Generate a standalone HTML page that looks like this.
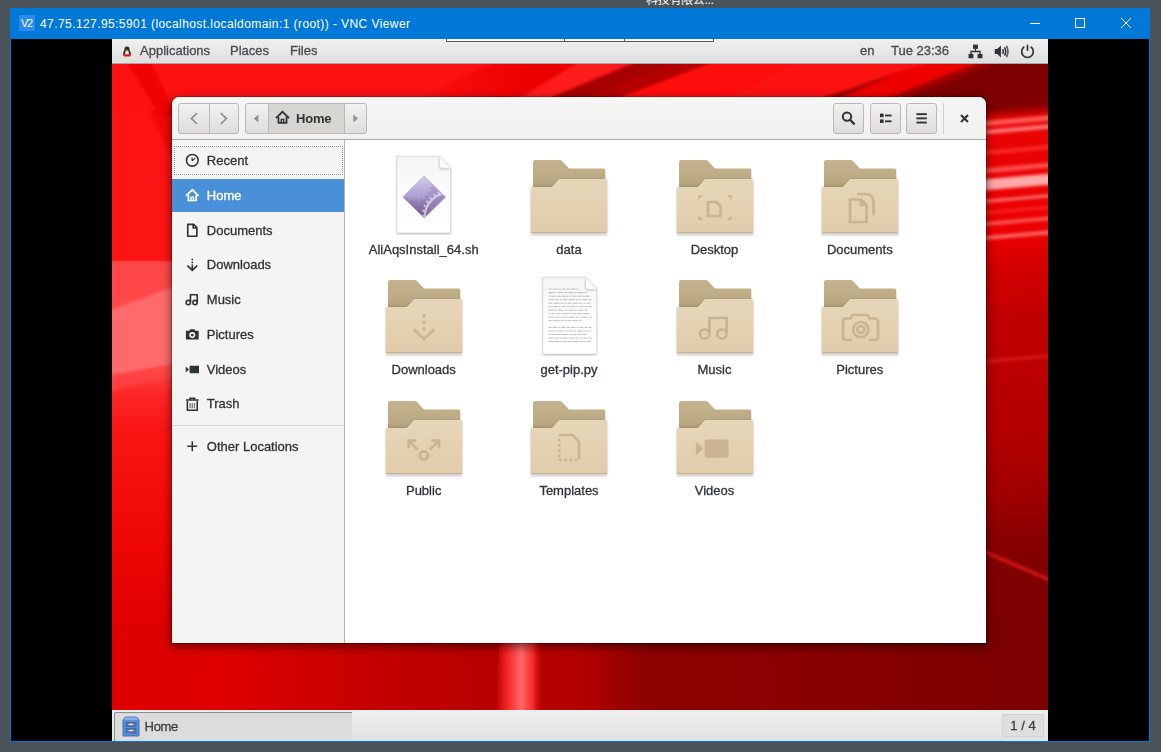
<!DOCTYPE html>
<html lang="en">
<head>
<meta charset="utf-8">
<title>VNC Viewer</title>
<style>
*{box-sizing:border-box;margin:0;padding:0}
html,body{width:1161px;height:752px;overflow:hidden}
body{background:#4b535a;font-family:"Liberation Sans","Noto Sans CJK SC",sans-serif;position:relative}
.abs{position:absolute}
#cjk{position:absolute;left:646px;top:-8px;font-size:12px;line-height:16px;color:#fff;white-space:nowrap;letter-spacing:-.3px}
#vnc{position:absolute;left:10px;top:8px;width:1140px;height:734px;background:#0078d7}
#vtitle{position:absolute;left:30px;top:8px;height:16px;line-height:16px;font-size:12px;color:#fff;white-space:nowrap;letter-spacing:.42px}
#vicon{position:absolute;left:9px;top:7px;width:16px;height:16px;background:#2b8af0;color:#fff;font-size:11px;line-height:16px;text-align:center;letter-spacing:-1.2px;text-indent:-1px}
#black{position:absolute;left:1px;top:31px;width:1138px;height:702px;background:#000}
#peek{position:absolute;left:436px;top:31px;width:268px;height:3px;background:#fafafa;border:1px solid #5a5a5a;border-top:none}
#peek i{position:absolute;top:0;width:1px;height:2px;background:#5a5a5a}
#desk{position:absolute;left:101px;top:0;width:936px;height:702px;overflow:hidden;background:#e00000}
#wall{position:absolute;left:0;top:0;width:936px;height:702px}
#topbar{position:absolute;left:0;top:0;width:936px;height:25px;background:linear-gradient(#f0f0f0,#dfdfdf);border-bottom:1px solid #a6a4a4;font-size:13px;color:#474b4d}
#topbar span{position:absolute;top:0;line-height:24px;white-space:nowrap}
#topbar svg{position:absolute}
#botbar{position:absolute;left:0;top:671px;width:936px;height:31px;background:linear-gradient(#eeeeee,#e1e1e1);border-top:1px solid #f4f0f0;font-size:13px;color:#3a3e40}
#task{position:absolute;left:2px;top:1px;width:238px;height:30px;background:#dcdcdc;border:1px solid #8c8c8c;border-right:none;border-bottom:none;border-radius:2px 0 0 0}
#task span{position:absolute;left:29.6px;top:0;line-height:27px;letter-spacing:-.35px}
#ws{position:absolute;left:890px;top:3px;width:42px;height:23px;background:#dedede;border:1px solid #d2d2d2;text-align:center;line-height:21px;font-size:13px}
#win{position:absolute;left:60px;top:58px;width:814px;height:546px;border-radius:7px 7px 0 0;box-shadow:0 3px 10px 1px rgba(0,0,0,.5),0 0 0 1px rgba(0,0,0,.2);background:#fff;overflow:hidden}
#hdr{position:absolute;left:0;top:0;width:814px;height:43px;background:linear-gradient(#f6f6f5,#f1f1f0);border-bottom:1px solid #acaca9;border-radius:7px 7px 0 0}
.btn{position:absolute;top:6px;height:31px;border:1px solid #b8b8b4;border-radius:3px;background:linear-gradient(#f2f1f0,#dedddb);overflow:hidden}
.btn svg{position:absolute}
#side{position:absolute;left:0;top:43px;width:173px;height:503px;background:#f4f4f2;border-right:1px solid #b4b4b0;font-size:13px;color:#2e3436}
.row{position:absolute;left:0;width:172px;height:33px}
.row span{position:absolute;left:34.8px;top:0;line-height:33px;white-space:nowrap}
.row svg{position:absolute;left:12.7px;top:9.2px}
.sel{background:#4a90d9;color:#fff}
#main{position:absolute;left:173px;top:43px;width:641px;height:503px;background:#fff;font-size:13px;color:#2e3436}
.lbl{position:absolute;width:140px;text-align:center;line-height:16px;white-space:nowrap}
.ic{position:absolute}
#hdr,#side,#main,#topbar,#botbar{filter:blur(.4px)}
#side,#main,#topbar,#botbar{-webkit-text-stroke:.3px currentColor}
</style>
</head>
<body>
<div id="cjk">科技有限公...</div>
<div id="vnc">
  <div id="vicon">V2</div>
  <div id="vtitle">47.75.127.95:5901 (localhost.localdomain:1 (root)) - VNC Viewer</div>
  <svg class="abs" style="left:1010px;top:0" width="130" height="31" viewBox="0 0 130 31">
    <g stroke="#fff" stroke-width="1" fill="none">
      <path d="M10 15.5h10"/>
      <rect x="55.5" y="10.5" width="9" height="9"/>
      <path d="M101 10l10 10M111 10l-10 10"/>
    </g>
  </svg>
  <div id="black">
    <div id="desk">
<svg id="wall" width="936" height="702" viewBox="112 39 936 702">
<defs>
<linearGradient id="gL" x1="0" y1="64" x2="0" y2="710" gradientUnits="userSpaceOnUse">
<stop offset="0" stop-color="#fd1212"/><stop offset=".303" stop-color="#fc1414"/><stop offset=".307" stop-color="#ff4646"/><stop offset=".47" stop-color="#ff4a4a"/><stop offset=".51" stop-color="#fd2626"/><stop offset=".57" stop-color="#fb1414"/><stop offset=".75" stop-color="#ee0606"/><stop offset=".876" stop-color="#df0000"/><stop offset="1" stop-color="#de0000"/>
</linearGradient>
<linearGradient id="gB" x1="112" y1="0" x2="1048" y2="0" gradientUnits="userSpaceOnUse">
<stop offset="0" stop-color="#de0000"/><stop offset=".12" stop-color="#e00000"/><stop offset=".28" stop-color="#c40000"/><stop offset=".4" stop-color="#b80000"/><stop offset=".5" stop-color="#b40000"/><stop offset=".57" stop-color="#8e0000"/><stop offset=".8" stop-color="#880000"/><stop offset="1" stop-color="#7c0000"/>
</linearGradient>
<linearGradient id="gS" x1="496" y1="0" x2="542" y2="0" gradientUnits="userSpaceOnUse">
<stop offset="0" stop-color="#ff3030" stop-opacity="0"/><stop offset=".25" stop-color="#ff2a2a" stop-opacity=".9"/><stop offset=".55" stop-color="#ff6a6a"/><stop offset=".8" stop-color="#ff3030" stop-opacity=".9"/><stop offset="1" stop-color="#e01010" stop-opacity="0"/>
</linearGradient>
<linearGradient id="gR" x1="0" y1="97" x2="0" y2="650" gradientUnits="userSpaceOnUse">
<stop offset="0" stop-color="#7c0000"/><stop offset=".018" stop-color="#860000"/><stop offset=".04" stop-color="#ea0404"/><stop offset=".25" stop-color="#ec0000"/><stop offset=".3" stop-color="#d40000"/><stop offset=".4" stop-color="#c00000"/><stop offset=".6" stop-color="#b40000"/><stop offset=".72" stop-color="#a00000"/><stop offset=".78" stop-color="#8c0000"/><stop offset=".85" stop-color="#800000"/><stop offset="1" stop-color="#7c0000"/>
</linearGradient>
<filter id="bl" x="-10%" y="-10%" width="120%" height="120%"><feGaussianBlur stdDeviation="1.6"/></filter>
<filter id="bl2" x="-20%" y="-20%" width="140%" height="140%"><feGaussianBlur stdDeviation="6"/></filter>
<clipPath id="cr"><rect x="978" y="97" width="70" height="565"/></clipPath>
<linearGradient id="gD" x1="400" y1="0" x2="540" y2="0" gradientUnits="userSpaceOnUse"><stop offset="0" stop-color="#ee0000" stop-opacity="0"/><stop offset="1" stop-color="#ea0000"/></linearGradient>
</defs>
<rect x="112" y="39" width="936" height="702" fill="#e00000"/>
<!-- left strip -->
<rect x="112" y="64" width="80" height="650" fill="url(#gL)"/>
<polygon points="128,62 158,62 182,160 172,160" fill="#e60000" opacity=".5" filter="url(#bl)"/>
<polygon points="108,311 184,283 184,363 108,376" fill="#ff6a6a" filter="url(#bl)"/>
<polygon points="108,376 184,363 184,372 108,392" fill="#ff4444" opacity=".7" filter="url(#bl)"/>
<!-- bottom strip -->
<rect x="112" y="630" width="936" height="82" fill="url(#gB)"/>
<polygon points="500,630 540,630 544,712 496,712" fill="url(#gS)"/>
<!-- top strip -->
<rect x="112" y="60" width="936" height="50" fill="#fd1212"/>
<g filter="url(#bl)">
<polygon points="126,60 150,60 176,116 160,116" fill="#ec0000" opacity=".8"/>
<polygon points="380,116 500,60 582,60 492,116" fill="url(#gD)"/>
<polygon points="492,116 582,60 640.5,60 505,116" fill="#ff1a1a"/>
<polygon points="505,116 640.5,60 684,60 541,116" fill="#a60000"/>
<polygon points="541,116 684,60 719,60 571,116" fill="#b40000"/>
<polygon points="571,116 719,60 800,60 690,116" fill="#ff0a0a"/>
<polygon points="770,116 905,70 800,116" fill="#a00000"/>
<polygon points="800,116 905,70 938,60 1010,60 875,116" fill="#ee0000"/>
<polygon points="880,101 920,101 1024,60 984,60" fill="#9c0000"/><polygon points="898,101 1002,60 1060,60 1060,101" fill="#7e0000"/>
</g>
<!-- right strip -->
<g clip-path="url(#cr)">
<g transform="rotate(-5 1017 180)"><rect x="860" y="80" width="310" height="600" fill="url(#gR)"/>
<g filter="url(#bl)">
<rect x="860" y="118.5" width="310" height="5" fill="#ff6a6a" opacity="0.85"/>
<rect x="860" y="127.5" width="310" height="4" fill="#ff8a8a" opacity="0.9"/>
<rect x="860" y="148.0" width="310" height="4" fill="#ff3838" opacity="0.7"/>
<rect x="860" y="165.5" width="310" height="5" fill="#ff5a5a" opacity="0.85"/>
<rect x="860" y="176.5" width="310" height="11" fill="#ffb0b0" opacity="0.95"/>
<rect x="860" y="197.0" width="310" height="3" fill="#ff7a7a" opacity="0.9"/>
<rect x="860" y="208.5" width="310" height="3" fill="#ff3a3a" opacity="0.6"/>
<rect x="860" y="219.25" width="310" height="3.5" fill="#ff6868" opacity="0.85"/>
<rect x="860" y="233.0" width="310" height="4" fill="#ff7474" opacity="0.85"/>
<rect x="860" y="356.0" width="310" height="4" fill="#e82020" opacity="0.6"/>
</g></g>
<polygon points="976,546 1050,578 1050,582 976,550" fill="#e01818" opacity=".85" filter="url(#bl)"/>
</g>
</svg>
      <div id="topbar">
        <span style="left:28px">Applications</span>
        <span style="left:118px">Places</span>
        <span style="left:178px">Files</span>
        <span style="left:748px">en</span>
        <span style="left:779px">Tue 23:36</span>

<svg style="left:9px;top:6px" width="12" height="13" viewBox="0 0 12 13"><ellipse cx="6" cy="7" rx="5.6" ry="5.6" fill="#f4f4f4" stroke="#d0d0d0" stroke-width=".6"/><path d="M6 1.6 Q8.6 1.6 8.6 5 Q10.4 7.4 10 9.4 H2 Q1.6 7.4 3.4 5 Q3.4 1.6 6 1.6Z" fill="#2a2a2a"/><ellipse cx="6" cy="7.6" rx="2" ry="2.2" fill="#e8e0d0"/><path d="M4.6 4.8 H7.4 L6 6 Z" fill="#f0a000"/><path d="M1.6 9.6 H10.4 L9 11.4 H3 Z" fill="#e01010"/></svg>
<svg style="left:856px;top:5px" width="15" height="15" viewBox="0 0 16 16" fill="#2e3436"><rect x="5.4" y="0.6" width="5.2" height="4.6"/><rect x="0.6" y="10.6" width="5.2" height="4.6"/><rect x="10.2" y="10.6" width="5.2" height="4.6"/><path d="M7.3 5 H8.7 V7.3 H13.5 V10.8 H12.1 V8.7 H3.9 V10.8 H2.5 V7.3 H7.3 Z"/></svg>
<svg style="left:881.5px;top:5px" width="15" height="15" viewBox="0 0 16 16" fill="#2e3436"><path d="M0.8 5.4 H3.4 L7.4 1.6 V14.4 L3.4 10.6 H0.8 Z"/><g fill="none" stroke="#2e3436" stroke-width="1.7"><path d="M9.2 5.4 Q10.6 8 9.2 10.6"/><path d="M11.3 3.6 Q13.6 8 11.3 12.4"/><path d="M13.4 2 Q16.4 8 13.4 14" opacity=".8"/></g></svg>
<svg style="left:907.5px;top:5px" width="15" height="15" viewBox="0 0 16 16" fill="none" stroke="#2e3436" stroke-width="1.8"><path d="M8 0.8 V7.4"/><path d="M4.6 3 A6.2 6.2 0 1 0 11.4 3"/></svg>

      </div>
      <div id="win">
        <div id="hdr">
<div class="btn" style="left:6px;width:61px"><i class="abs" style="left:30px;top:0;width:1px;height:31px;background:#b8b8b4"></i>
<svg width="60" height="29" viewBox="0 0 60 29" style="left:0;top:0" fill="none" stroke="#8e9192" stroke-width="1.7"><path d="M18 9.2 L12.4 14.6 L18 20"/><path d="M41.8 9.2 L47.4 14.6 L41.8 20"/></svg></div>
<div class="btn" style="left:73px;width:121.5px">
<i class="abs" style="left:21.5px;top:0;width:77px;height:31px;background:#d6d5d2;border-left:1px solid #b8b8b4;border-right:1px solid #b8b8b4"></i>
<svg width="120" height="29" viewBox="0 0 120 29" style="left:0;top:0"><path d="M12.4 10.6 V18.6 L7.8 14.6 Z" fill="#8e9192"/><path d="M107.4 10.6 V18.6 L112 14.6 Z" fill="#8e9192"/></svg>
<svg width="15" height="15" viewBox="0 0 16 16" style="left:29px;top:6.4px;color:#2e3436" fill="currentColor"><path d="M1 8.6 L8 2 L15 8.6" fill="none" stroke="currentColor" stroke-width="2"/><path d="M3.7 7.4 V13.7 H12.3 V7.4" fill="none" stroke="currentColor" stroke-width="1.9"/><path d="M6.7 13.6 V10 H9.3 V13.6" fill="none" stroke="currentColor" stroke-width="1.5"/></svg>
<span class="abs" style="left:50px;top:0;line-height:29px;font-size:13px;font-weight:bold;color:#2e3436;letter-spacing:-.2px">Home</span>
</div>
<div class="btn" style="left:661px;width:31px"><svg width="29" height="29" viewBox="0 0 29 29" style="left:0;top:0" fill="none" stroke="#2e3436"><circle cx="13" cy="12.6" r="4.2" stroke-width="2"/><path d="M16 15.8 L20.6 20.4" stroke-width="2.2"/></svg></div>
<div class="btn" style="left:698px;width:30.5px"><svg width="29" height="29" viewBox="0 0 29 29" style="left:0;top:0" fill="#2e3436"><rect x="9" y="9.6" width="3.6" height="3.6"/><rect x="9" y="15.4" width="3.6" height="3.6"/><rect x="14" y="10.6" width="6.6" height="1.8"/><rect x="14" y="16.4" width="6.6" height="1.8"/></svg></div>
<div class="btn" style="left:734.2px;width:30.5px"><svg width="29" height="29" viewBox="0 0 29 29" style="left:0;top:0" fill="#2e3436"><rect x="9.4" y="9.2" width="10.4" height="1.9"/><rect x="9.4" y="13.4" width="10.4" height="1.9"/><rect x="9.4" y="17.6" width="10.4" height="1.9"/></svg></div>
<i class="abs" style="left:771px;top:6px;width:1px;height:31px;background:#d0d0cd"></i>
<svg class="abs" style="left:787px;top:16px" width="11" height="11" viewBox="0 0 11 11" stroke="#2e3436" stroke-width="2.1"><path d="M2 2 L9 9 M9 2 L2 9"/></svg>
</div>
        <div id="side">
<div class="row" style="top:4.30px"><svg width="14.6" height="14.6" viewBox="0 0 16 16" fill="currentColor" style=""><circle cx="8" cy="8" r="6.4" fill="none" stroke="currentColor" stroke-width="1.7"/><path d="M8 8.6 L7.6 5 M7.8 8.6 L11.2 5.6" stroke="currentColor" stroke-width="1.3" fill="none"/></svg><span>Recent</span></div>
<div class="row sel" style="top:39.03px"><svg width="14.6" height="14.6" viewBox="0 0 16 16" fill="currentColor" style=""><path d="M1 8.6 L8 2 L15 8.6" fill="none" stroke="currentColor" stroke-width="2"/><path d="M3.7 7.4 V13.7 H12.3 V7.4" fill="none" stroke="currentColor" stroke-width="1.9"/><path d="M6.7 13.6 V10 H9.3 V13.6" fill="none" stroke="currentColor" stroke-width="1.5"/></svg><span>Home</span></div>
<div class="row" style="top:73.76px"><svg width="14.6" height="14.6" viewBox="0 0 16 16" fill="currentColor" style=""><path d="M3 1.5 H9.5 L13 5 V14.5 H3 Z M9 2 V5.5 H12.6" fill="none" stroke="currentColor" stroke-width="1.8" stroke-linejoin="round"/></svg><span>Documents</span></div>
<div class="row" style="top:108.49px"><svg width="14.6" height="14.6" viewBox="0 0 16 16" fill="currentColor" style=""><circle cx="8" cy="1.6" r="1"/><circle cx="8" cy="4.8" r="1"/><path d="M8 7.2 V13.4 M2.6 8.4 L8 13.6 L13.4 8.4" fill="none" stroke="currentColor" stroke-width="1.8"/></svg><span>Downloads</span></div>
<div class="row" style="top:143.22px"><svg width="14.6" height="14.6" viewBox="0 0 16 16" fill="currentColor" style=""><circle cx="3.6" cy="11.6" r="2.4" fill="none" stroke="currentColor" stroke-width="1.7"/><circle cx="11" cy="11.6" r="2.4" fill="none" stroke="currentColor" stroke-width="1.7"/><path d="M6 11.6 V3 H13.4 V11.6" fill="none" stroke="currentColor" stroke-width="1.8"/></svg><span>Music</span></div>
<div class="row" style="top:177.95px"><svg width="14.6" height="14.6" viewBox="0 0 16 16" fill="currentColor" style=""><path d="M1 4.2 H4.6 L5.8 2.4 H10.2 L11.4 4.2 H15 V13.6 H1 Z M8 5.6 A3.3 3.3 0 1 0 8 12.2 A3.3 3.3 0 1 0 8 5.6 Z M8 7.4 A1.5 1.5 0 1 1 8 10.4 A1.5 1.5 0 1 1 8 7.4Z" fill="currentColor" fill-rule="evenodd"/></svg><span>Pictures</span></div>
<div class="row" style="top:212.68px"><svg width="14.6" height="14.6" viewBox="0 0 16 16" fill="currentColor" style=""><rect x="5" y="4" width="10.6" height="8.4" rx=".8"/><path d="M0.8 4.8 L4.4 8.2 L0.8 11.6 Z"/></svg><span>Videos</span></div>
<div class="row" style="top:247.41px"><svg width="14.6" height="14.6" viewBox="0 0 16 16" fill="currentColor" style=""><path d="M2.6 4.4 V14.6 H13.4 V4.4" fill="none" stroke="currentColor" stroke-width="1.7"/><path d="M1 3.4 H15 M5.4 3 V1.4 H10.6 V3" fill="none" stroke="currentColor" stroke-width="1.6"/><path d="M5.6 6.6 V12.4 M8 6.6 V12.4 M10.4 6.6 V12.4" stroke="currentColor" stroke-width="1.5" opacity=".6"/></svg><span>Trash</span></div>
<div class="abs" style="left:2px;top:6px;width:169px;height:29px;border:1px dotted #9a9a98"></div>
<div class="abs" style="left:0;top:285px;width:172px;height:1px;background:#d5d5d2"></div>
<div class="row" style="top:289.8px"><svg width="14.6" height="14.6" viewBox="0 0 16 16" fill="currentColor" style=""><path d="M8 2.6 V13.4 M2.6 8 H13.4" stroke="currentColor" stroke-width="1.7"/></svg><span>Other Locations</span></div>
</div>
        <div id="main">
<svg width="0" height="0" style="position:absolute"><defs>
<linearGradient id="fb" x1="0" y1="0" x2="0" y2="1"><stop offset="0" stop-color="#c3b28d"/><stop offset=".7" stop-color="#bba983"/><stop offset="1" stop-color="#a9966f"/></linearGradient>
<linearGradient id="ff" x1="0" y1="0" x2="0" y2="1"><stop offset="0" stop-color="#e7d6b9"/><stop offset="1" stop-color="#e0ccab"/></linearGradient>
<linearGradient id="pg" x1="0" y1="0" x2="0" y2="1"><stop offset="0" stop-color="#f4f4f4"/><stop offset=".5" stop-color="#fdfdfd"/><stop offset="1" stop-color="#ffffff"/></linearGradient>
<linearGradient id="dm" x1="0" y1="-21" x2="0" y2="21" gradientUnits="userSpaceOnUse"><stop offset="0" stop-color="#d2ccf2"/><stop offset=".5" stop-color="#ab9dd0"/><stop offset="1" stop-color="#7c5b92"/></linearGradient>
<filter id="fs" x="-10%" y="-10%" width="120%" height="120%"><feGaussianBlur stdDeviation="1.1"/></filter>
</defs></svg>
<svg class="ic" style="left:45.7px;top:13.0px" width="66" height="86" viewBox="0 0 66 86">
<path d="M5.8 3.2 H48.6 L59.6 15.2 V80 H5.8 Z" fill="#000" opacity=".3" filter="url(#fs)" transform="translate(0,.9)"/>
<path d="M5.8 3.2 H48.6 L59.6 15.2 V80 H5.8 Z" fill="url(#pg)" stroke="#d6d6d6" stroke-width=".7"/>
<path d="M48.6 3.2 V12.8 Q48.6 15.2 51 15.2 H59.6 Z" fill="#000" opacity=".25" filter="url(#fs)" transform="translate(-.3,1)"/>
<path d="M48.6 3.2 V12.8 Q48.6 15.2 51 15.2 H59.6 Z" fill="#fdfdfd" stroke="#d8d8d8" stroke-width=".5"/>
<g transform="translate(33.2,44.1)"><clipPath id="dmc"><path d="M0 -21.2 L21.4 0 L0 21 L-21.4 0 Z"/></clipPath>
<path d="M0 -21.2 L21.4 0 L0 21 L-21.4 0 Z" fill="url(#dm)"/>
<g clip-path="url(#dmc)">
<rect x="-22" y="-22" width="44" height="44" fill="#3a1f5a" opacity=".13"/>
<circle cx="-8.5" cy="-12.5" r="14.6" fill="url(#dm)"/>
<circle cx="-8.5" cy="-12.5" r="15.6" fill="none" stroke="url(#dm)" stroke-width="2.4" stroke-dasharray="2.5 2.4"/>
<circle cx="25" cy="20" r="22" fill="#a48fc4" opacity=".35"/>
<circle cx="25" cy="20" r="24.4" fill="none" stroke="#e4dcf2" stroke-opacity=".75" stroke-width="2.4"/>
<circle cx="25" cy="20" r="26.6" fill="none" stroke="#e4dcf2" stroke-opacity=".6" stroke-width="2.6" stroke-dasharray="2.4 2.5"/>
</g>
<path d="M0 -21.2 L21.4 0 L0 21 L-21.4 0 Z" fill="none" stroke="#b5a6d2" stroke-opacity=".7" stroke-width=".8"/></g></svg><div class="lbl" style="left:8.7px;top:101.5px">AliAqsInstall_64.sh</div>
<svg class="ic" style="left:179.0px;top:17.7px" width="90" height="80" viewBox="0 0 90 80">
<path d="M9 32 V4.2 Q9 2 11.2 2 H35.6 Q37 2 38 3 L45 10.4 H79.2 Q81.3 10.4 81.3 12.6 V32 Z" fill="url(#fb)"/>
<path d="M6.7 77.4 V31 Q6.7 29.1 8.7 29.1 H26.6 Q28 29.1 28.8 28 L33.8 22.2 Q34.7 21.1 36 21.1 H81.3 Q83.3 21.1 83.3 23 V77.4 Z" fill="#000" opacity=".18" filter="url(#fs)"/>
<path d="M6.7 73.5 V31 Q6.7 29.1 8.7 29.1 H26.6 Q28 29.1 28.8 28 L33.8 22.2 Q34.7 21.1 36 21.1 H81.3 Q83.3 21.1 83.3 23 V73.5 Q83.3 75.1 81.7 75.1 H8.3 Q6.7 75.1 6.7 73.5 Z" fill="url(#ff)"/>
<path d="M6.7 73 V73.5 Q6.7 75.1 8.3 75.1 H81.7 Q83.3 75.1 83.3 73.5 V73 Q83.3 74 81.7 74 H8.3 Q6.7 74 6.7 73 Z" fill="#c8b28c"/>
<g fill="none" stroke="#c9b390" stroke-width="2.7" transform="translate(45,2)"></g>
</svg><div class="lbl" style="left:154.0px;top:101.5px">data</div>
<svg class="ic" style="left:324.5px;top:17.7px" width="90" height="80" viewBox="0 0 90 80">
<path d="M9 32 V4.2 Q9 2 11.2 2 H35.6 Q37 2 38 3 L45 10.4 H79.2 Q81.3 10.4 81.3 12.6 V32 Z" fill="url(#fb)"/>
<path d="M6.7 77.4 V31 Q6.7 29.1 8.7 29.1 H26.6 Q28 29.1 28.8 28 L33.8 22.2 Q34.7 21.1 36 21.1 H81.3 Q83.3 21.1 83.3 23 V77.4 Z" fill="#000" opacity=".18" filter="url(#fs)"/>
<path d="M6.7 73.5 V31 Q6.7 29.1 8.7 29.1 H26.6 Q28 29.1 28.8 28 L33.8 22.2 Q34.7 21.1 36 21.1 H81.3 Q83.3 21.1 83.3 23 V73.5 Q83.3 75.1 81.7 75.1 H8.3 Q6.7 75.1 6.7 73.5 Z" fill="url(#ff)"/>
<path d="M6.7 73 V73.5 Q6.7 75.1 8.3 75.1 H81.7 Q83.3 75.1 83.3 73.5 V73 Q83.3 74 81.7 74 H8.3 Q6.7 74 6.7 73 Z" fill="#c8b28c"/>
<g fill="none" stroke="#c9b390" stroke-width="2.7" transform="translate(45,2)"><path d="M-7 42 H1.5 L5.5 46 V56 H-7 Z" /><g fill="#c9b390" stroke="none"><path d="M-16.6 35.3 H-12 L-16.6 40Z"/><path d="M16.6 35.3 H12 L16.6 40Z"/><path d="M-16.6 60 H-12 L-16.6 55.3Z"/><path d="M16.6 60 H12 L16.6 55.3Z"/></g></g>
</svg><div class="lbl" style="left:299.5px;top:101.5px">Desktop</div>
<svg class="ic" style="left:469.8px;top:17.7px" width="90" height="80" viewBox="0 0 90 80">
<path d="M9 32 V4.2 Q9 2 11.2 2 H35.6 Q37 2 38 3 L45 10.4 H79.2 Q81.3 10.4 81.3 12.6 V32 Z" fill="url(#fb)"/>
<path d="M6.7 77.4 V31 Q6.7 29.1 8.7 29.1 H26.6 Q28 29.1 28.8 28 L33.8 22.2 Q34.7 21.1 36 21.1 H81.3 Q83.3 21.1 83.3 23 V77.4 Z" fill="#000" opacity=".18" filter="url(#fs)"/>
<path d="M6.7 73.5 V31 Q6.7 29.1 8.7 29.1 H26.6 Q28 29.1 28.8 28 L33.8 22.2 Q34.7 21.1 36 21.1 H81.3 Q83.3 21.1 83.3 23 V73.5 Q83.3 75.1 81.7 75.1 H8.3 Q6.7 75.1 6.7 73.5 Z" fill="url(#ff)"/>
<path d="M6.7 73 V73.5 Q6.7 75.1 8.3 75.1 H81.7 Q83.3 75.1 83.3 73.5 V73 Q83.3 74 81.7 74 H8.3 Q6.7 74 6.7 73 Z" fill="#c8b28c"/>
<g fill="none" stroke="#c9b390" stroke-width="2.7" transform="translate(45,2)"><path d="M-10 39.5 H1 L6.6 45 V62 H-10 Z M1 39.5 V45 H6.6"/><path d="M-3 34 H5 Q13.5 34 13.5 42.5 V54.5"/></g>
</svg><div class="lbl" style="left:444.8px;top:101.5px">Documents</div>
<svg class="ic" style="left:33.7px;top:138.2px" width="90" height="80" viewBox="0 0 90 80">
<path d="M9 32 V4.2 Q9 2 11.2 2 H35.6 Q37 2 38 3 L45 10.4 H79.2 Q81.3 10.4 81.3 12.6 V32 Z" fill="url(#fb)"/>
<path d="M6.7 77.4 V31 Q6.7 29.1 8.7 29.1 H26.6 Q28 29.1 28.8 28 L33.8 22.2 Q34.7 21.1 36 21.1 H81.3 Q83.3 21.1 83.3 23 V77.4 Z" fill="#000" opacity=".18" filter="url(#fs)"/>
<path d="M6.7 73.5 V31 Q6.7 29.1 8.7 29.1 H26.6 Q28 29.1 28.8 28 L33.8 22.2 Q34.7 21.1 36 21.1 H81.3 Q83.3 21.1 83.3 23 V73.5 Q83.3 75.1 81.7 75.1 H8.3 Q6.7 75.1 6.7 73.5 Z" fill="url(#ff)"/>
<path d="M6.7 73 V73.5 Q6.7 75.1 8.3 75.1 H81.7 Q83.3 75.1 83.3 73.5 V73 Q83.3 74 81.7 74 H8.3 Q6.7 74 6.7 73 Z" fill="#c8b28c"/>
<g fill="none" stroke="#c9b390" stroke-width="2.7" transform="translate(45,2)"><circle cx="0" cy="35.6" r="1.9" fill="#c9b390" stroke="none"/><circle cx="0" cy="42.3" r="1.9" fill="#c9b390" stroke="none"/><circle cx="0" cy="48.8" r="1.9" fill="#c9b390" stroke="none"/><path d="M-10.3 49.3 L0 59.2 L10.3 49.3"/></g>
</svg><div class="lbl" style="left:8.7px;top:222px">Downloads</div>
<svg class="ic" style="left:191.7px;top:134.3px" width="66" height="86" viewBox="0 0 66 86">
<path d="M5.8 3.2 H48.6 L59.6 15.2 V80 H5.8 Z" fill="#000" opacity=".3" filter="url(#fs)" transform="translate(0,.9)"/>
<path d="M5.8 3.2 H48.6 L59.6 15.2 V80 H5.8 Z" fill="url(#pg)" stroke="#d6d6d6" stroke-width=".7"/>
<path d="M48.6 3.2 V12.8 Q48.6 15.2 51 15.2 H59.6 Z" fill="#000" opacity=".25" filter="url(#fs)" transform="translate(-.3,1)"/>
<path d="M48.6 3.2 V12.8 Q48.6 15.2 51 15.2 H59.6 Z" fill="#fdfdfd" stroke="#d8d8d8" stroke-width=".5"/>
<path d="M11.5 15.1 h30" stroke="#8c8c8c" stroke-width=".9" stroke-dasharray="3 1 5 1 2 1 4 1" opacity=".62" fill="none"/><path d="M11.5 18.6 h38" stroke="#8c8c8c" stroke-width=".9" stroke-dasharray="5 1 2 1 6 1 3 1" opacity=".62" fill="none"/><path d="M11.5 22.2 h41" stroke="#8c8c8c" stroke-width=".9" stroke-dasharray="2 1 4 1 4 1 7 1" opacity=".62" fill="none"/><path d="M11.5 25.7 h43" stroke="#8c8c8c" stroke-width=".9" stroke-dasharray="6 1 3 1 2 1 5 1" opacity=".62" fill="none"/><path d="M11.5 29.2 h43" stroke="#8c8c8c" stroke-width=".9" stroke-dasharray="4 1 6 1 3 1 2 1" opacity=".62" fill="none"/><path d="M11.5 32.7 h43" stroke="#8c8c8c" stroke-width=".9" stroke-dasharray="3 1 5 1 2 1 4 1" opacity=".62" fill="none"/><path d="M11.5 36.2 h40" stroke="#8c8c8c" stroke-width=".9" stroke-dasharray="5 1 2 1 6 1 3 1" opacity=".62" fill="none"/><path d="M11.5 39.7 h42" stroke="#8c8c8c" stroke-width=".9" stroke-dasharray="2 1 4 1 4 1 7 1" opacity=".62" fill="none"/><path d="M11.5 43.2 h43" stroke="#8c8c8c" stroke-width=".9" stroke-dasharray="6 1 3 1 2 1 5 1" opacity=".62" fill="none"/><path d="M11.5 46.7 h33" stroke="#8c8c8c" stroke-width=".9" stroke-dasharray="4 1 6 1 3 1 2 1" opacity=".62" fill="none"/><path d="M11.5 53.4 h43" stroke="#8c8c8c" stroke-width=".9" stroke-dasharray="3 1 5 1 2 1 4 1" opacity=".62" fill="none"/><path d="M11.5 57.0 h42" stroke="#8c8c8c" stroke-width=".9" stroke-dasharray="5 1 2 1 6 1 3 1" opacity=".62" fill="none"/><path d="M11.5 60.5 h38" stroke="#8c8c8c" stroke-width=".9" stroke-dasharray="2 1 4 1 4 1 7 1" opacity=".62" fill="none"/><path d="M11.5 64.0 h43" stroke="#8c8c8c" stroke-width=".9" stroke-dasharray="6 1 3 1 2 1 5 1" opacity=".62" fill="none"/><path d="M11.5 67.5 h43" stroke="#8c8c8c" stroke-width=".9" stroke-dasharray="4 1 6 1 3 1 2 1" opacity=".62" fill="none"/></svg><div class="lbl" style="left:154.0px;top:222px">get-pip.py</div>
<svg class="ic" style="left:324.5px;top:138.2px" width="90" height="80" viewBox="0 0 90 80">
<path d="M9 32 V4.2 Q9 2 11.2 2 H35.6 Q37 2 38 3 L45 10.4 H79.2 Q81.3 10.4 81.3 12.6 V32 Z" fill="url(#fb)"/>
<path d="M6.7 77.4 V31 Q6.7 29.1 8.7 29.1 H26.6 Q28 29.1 28.8 28 L33.8 22.2 Q34.7 21.1 36 21.1 H81.3 Q83.3 21.1 83.3 23 V77.4 Z" fill="#000" opacity=".18" filter="url(#fs)"/>
<path d="M6.7 73.5 V31 Q6.7 29.1 8.7 29.1 H26.6 Q28 29.1 28.8 28 L33.8 22.2 Q34.7 21.1 36 21.1 H81.3 Q83.3 21.1 83.3 23 V73.5 Q83.3 75.1 81.7 75.1 H8.3 Q6.7 75.1 6.7 73.5 Z" fill="url(#ff)"/>
<path d="M6.7 73 V73.5 Q6.7 75.1 8.3 75.1 H81.7 Q83.3 75.1 83.3 73.5 V73 Q83.3 74 81.7 74 H8.3 Q6.7 74 6.7 73 Z" fill="#c8b28c"/>
<g fill="none" stroke="#c9b390" stroke-width="2.7" transform="translate(45,2)"><circle cx="-10.4" cy="54" r="4.7"/><circle cx="6.8" cy="54" r="4.7"/><path d="M-5.6 54 V38 H11.6 V54"/></g>
</svg><div class="lbl" style="left:299.5px;top:222px">Music</div>
<svg class="ic" style="left:469.8px;top:138.2px" width="90" height="80" viewBox="0 0 90 80">
<path d="M9 32 V4.2 Q9 2 11.2 2 H35.6 Q37 2 38 3 L45 10.4 H79.2 Q81.3 10.4 81.3 12.6 V32 Z" fill="url(#fb)"/>
<path d="M6.7 77.4 V31 Q6.7 29.1 8.7 29.1 H26.6 Q28 29.1 28.8 28 L33.8 22.2 Q34.7 21.1 36 21.1 H81.3 Q83.3 21.1 83.3 23 V77.4 Z" fill="#000" opacity=".18" filter="url(#fs)"/>
<path d="M6.7 73.5 V31 Q6.7 29.1 8.7 29.1 H26.6 Q28 29.1 28.8 28 L33.8 22.2 Q34.7 21.1 36 21.1 H81.3 Q83.3 21.1 83.3 23 V73.5 Q83.3 75.1 81.7 75.1 H8.3 Q6.7 75.1 6.7 73.5 Z" fill="url(#ff)"/>
<path d="M6.7 73 V73.5 Q6.7 75.1 8.3 75.1 H81.7 Q83.3 75.1 83.3 73.5 V73 Q83.3 74 81.7 74 H8.3 Q6.7 74 6.7 73 Z" fill="#c8b28c"/>
<g fill="none" stroke="#c9b390" stroke-width="2.7" transform="translate(45,2)"><path d="M-8 60 H-13.5 Q-17 60 -17 56.5 V42 Q-17 38.5 -13.5 38.5 H-9.5 L-7.5 35 H7.5 L9.5 38.5 H14.5 Q18 38.5 18 42 V56.5 Q18 60 14.5 60 H9"/><circle cx="0.8" cy="49.6" r="7.6"/><circle cx="0.8" cy="49.6" r="3.4"/></g>
</svg><div class="lbl" style="left:444.8px;top:222px">Pictures</div>
<svg class="ic" style="left:33.7px;top:259.3px" width="90" height="80" viewBox="0 0 90 80">
<path d="M9 32 V4.2 Q9 2 11.2 2 H35.6 Q37 2 38 3 L45 10.4 H79.2 Q81.3 10.4 81.3 12.6 V32 Z" fill="url(#fb)"/>
<path d="M6.7 77.4 V31 Q6.7 29.1 8.7 29.1 H26.6 Q28 29.1 28.8 28 L33.8 22.2 Q34.7 21.1 36 21.1 H81.3 Q83.3 21.1 83.3 23 V77.4 Z" fill="#000" opacity=".18" filter="url(#fs)"/>
<path d="M6.7 73.5 V31 Q6.7 29.1 8.7 29.1 H26.6 Q28 29.1 28.8 28 L33.8 22.2 Q34.7 21.1 36 21.1 H81.3 Q83.3 21.1 83.3 23 V73.5 Q83.3 75.1 81.7 75.1 H8.3 Q6.7 75.1 6.7 73.5 Z" fill="url(#ff)"/>
<path d="M6.7 73 V73.5 Q6.7 75.1 8.3 75.1 H81.7 Q83.3 75.1 83.3 73.5 V73 Q83.3 74 81.7 74 H8.3 Q6.7 74 6.7 73 Z" fill="#c8b28c"/>
<g fill="none" stroke="#c9b390" stroke-width="2.7" transform="translate(45,2)"><circle cx="-0.2" cy="54.4" r="4"/><path d="M-6.2 48.8 L-14.6 40.4 M-15.4 47.2 V39.6 H-7.8 M5.8 48.8 L14.2 40.4 M15 47.2 V39.6 H7.4"/></g>
</svg><div class="lbl" style="left:8.7px;top:342.5px">Public</div>
<svg class="ic" style="left:179.0px;top:259.3px" width="90" height="80" viewBox="0 0 90 80">
<path d="M9 32 V4.2 Q9 2 11.2 2 H35.6 Q37 2 38 3 L45 10.4 H79.2 Q81.3 10.4 81.3 12.6 V32 Z" fill="url(#fb)"/>
<path d="M6.7 77.4 V31 Q6.7 29.1 8.7 29.1 H26.6 Q28 29.1 28.8 28 L33.8 22.2 Q34.7 21.1 36 21.1 H81.3 Q83.3 21.1 83.3 23 V77.4 Z" fill="#000" opacity=".18" filter="url(#fs)"/>
<path d="M6.7 73.5 V31 Q6.7 29.1 8.7 29.1 H26.6 Q28 29.1 28.8 28 L33.8 22.2 Q34.7 21.1 36 21.1 H81.3 Q83.3 21.1 83.3 23 V73.5 Q83.3 75.1 81.7 75.1 H8.3 Q6.7 75.1 6.7 73.5 Z" fill="url(#ff)"/>
<path d="M6.7 73 V73.5 Q6.7 75.1 8.3 75.1 H81.7 Q83.3 75.1 83.3 73.5 V73 Q83.3 74 81.7 74 H8.3 Q6.7 74 6.7 73 Z" fill="#c8b28c"/>
<g fill="none" stroke="#c9b390" stroke-width="2.7" transform="translate(45,2)"><path d="M-9.8 34 H3.4 L10 40.6 V58.8"/><path d="M-9.8 38 V58.8 H8" stroke-dasharray="2.6 2.6"/></g>
</svg><div class="lbl" style="left:154.0px;top:342.5px">Templates</div>
<svg class="ic" style="left:324.5px;top:259.3px" width="90" height="80" viewBox="0 0 90 80">
<path d="M9 32 V4.2 Q9 2 11.2 2 H35.6 Q37 2 38 3 L45 10.4 H79.2 Q81.3 10.4 81.3 12.6 V32 Z" fill="url(#fb)"/>
<path d="M6.7 77.4 V31 Q6.7 29.1 8.7 29.1 H26.6 Q28 29.1 28.8 28 L33.8 22.2 Q34.7 21.1 36 21.1 H81.3 Q83.3 21.1 83.3 23 V77.4 Z" fill="#000" opacity=".18" filter="url(#fs)"/>
<path d="M6.7 73.5 V31 Q6.7 29.1 8.7 29.1 H26.6 Q28 29.1 28.8 28 L33.8 22.2 Q34.7 21.1 36 21.1 H81.3 Q83.3 21.1 83.3 23 V73.5 Q83.3 75.1 81.7 75.1 H8.3 Q6.7 75.1 6.7 73.5 Z" fill="url(#ff)"/>
<path d="M6.7 73 V73.5 Q6.7 75.1 8.3 75.1 H81.7 Q83.3 75.1 83.3 73.5 V73 Q83.3 74 81.7 74 H8.3 Q6.7 74 6.7 73 Z" fill="#c8b28c"/>
<g fill="none" stroke="#c9b390" stroke-width="2.7" transform="translate(45,2)"><rect x="-10.5" y="38.4" width="24" height="18.3" rx="2.6" fill="#c9b390" stroke="none"/><path d="M-19.2 40.8 L-11.6 47.6 L-19.2 54.4 Z" fill="#c9b390" stroke="none"/></g>
</svg><div class="lbl" style="left:299.5px;top:342.5px">Videos</div>
</div>
      </div>
      <div id="botbar">
        <div id="task"><svg class="abs" style="left:7px;top:2.6px" width="18" height="21" viewBox="0 0 18 21"><path d="M3.4 1 H14.6 L17 4 V20 H1 V4 Z" fill="#5b8fd6" stroke="#3b69b0" stroke-width=".9"/><path d="M3.6 1.6 H14.4 L16.2 3.8 H1.8 Z" fill="#8fb5ea"/><rect x="4" y="6.2" width="10" height="4.6" fill="#4a7cc4" stroke="#2f5a9e" stroke-width=".6"/><rect x="4" y="12.4" width="10" height="4.6" fill="#4a7cc4" stroke="#2f5a9e" stroke-width=".6"/><rect x="6.2" y="7.2" width="5.6" height="2.2" fill="#e8e8e0" stroke="#555" stroke-width=".5"/><rect x="6.2" y="13.4" width="5.6" height="2.2" fill="#e8e8e0" stroke="#555" stroke-width=".5"/></svg><span>Home</span></div>
        <div id="ws">1 / 4</div>
      </div>
    </div>
  </div>
  <div id="peek"><i style="left:117px"></i><i style="left:177px"></i></div>
</div>
</body>
</html>
